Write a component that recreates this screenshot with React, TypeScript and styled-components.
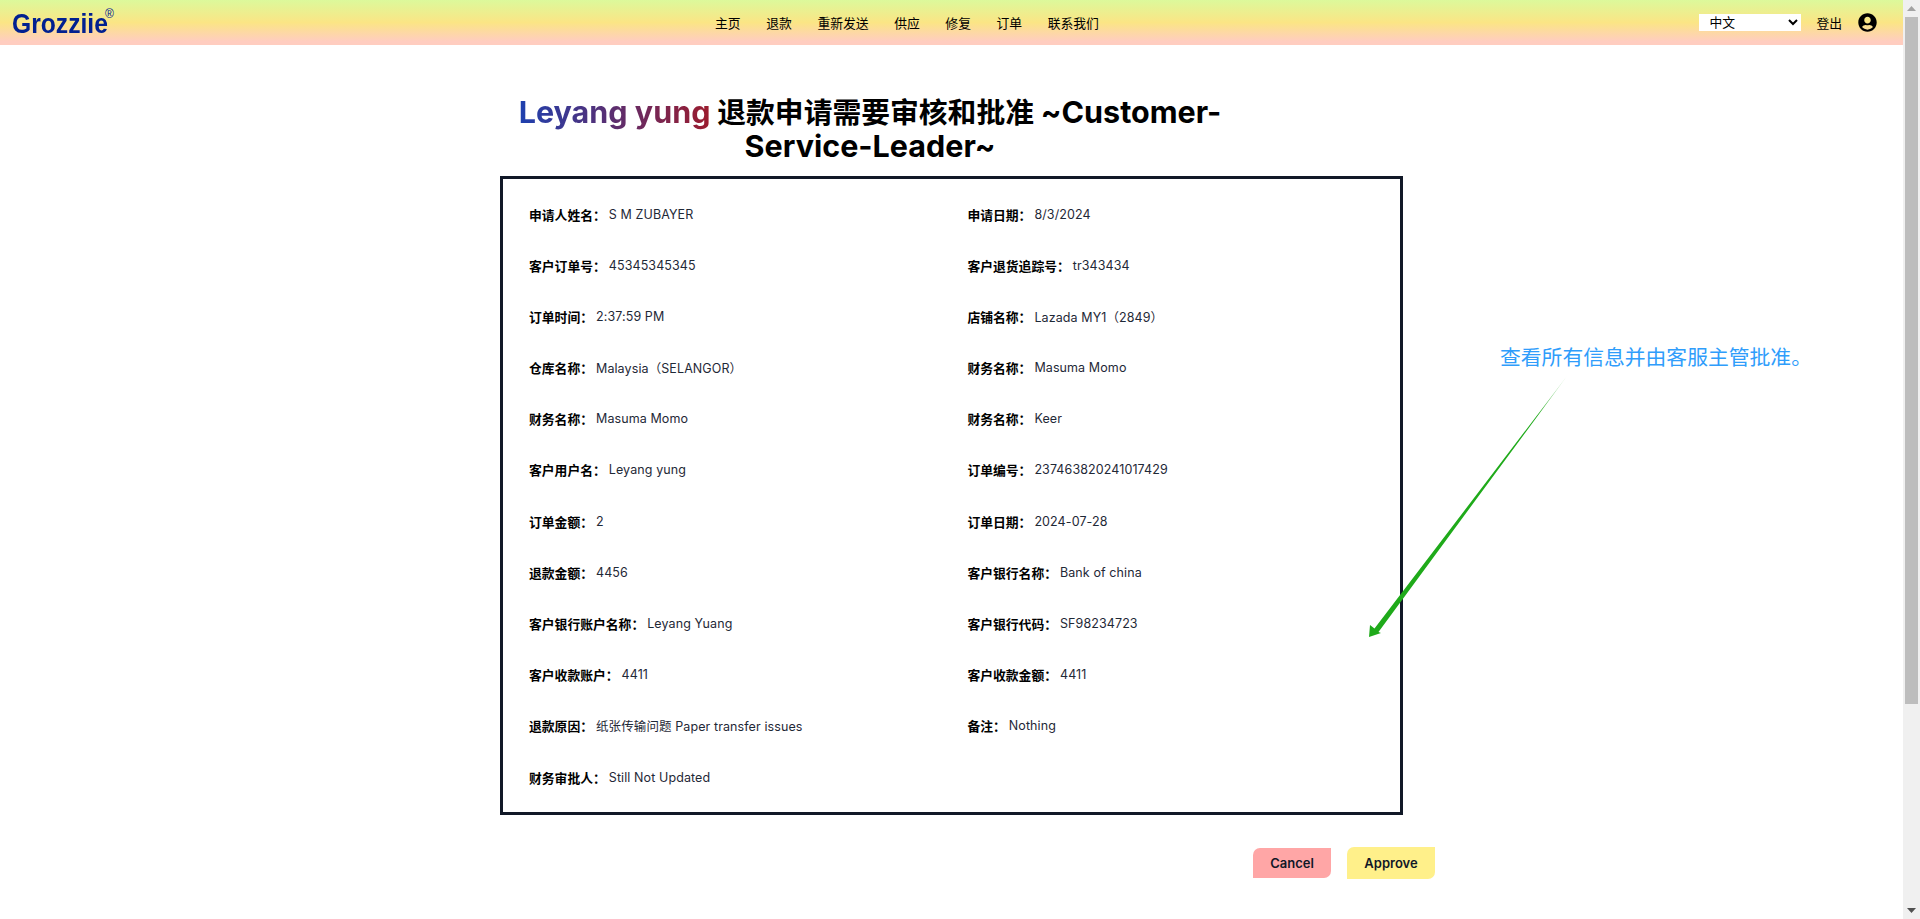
import React from 'react';
import styled, { createGlobalStyle } from 'styled-components';
import { FaUserCircle } from 'react-icons/fa';

const navItems = ['主页', '退款', '重新发送', '供应', '修复', '订单', '联系我们'];

const fields: [string, string][] = [
  ['申请人姓名：', 'S M ZUBAYER'],
  ['申请日期：', '8/3/2024'],
  ['客户订单号：', '45345345345'],
  ['客户退货追踪号：', 'tr343434'],
  ['订单时间：', '2:37:59 PM'],
  ['店铺名称：', 'Lazada MY1（2849）'],
  ['仓库名称：', 'Malaysia（SELANGOR）'],
  ['财务名称：', 'Masuma Momo'],
  ['财务名称：', 'Masuma Momo'],
  ['财务名称：', 'Keer'],
  ['客户用户名：', 'Leyang yung'],
  ['订单编号：', '237463820241017429'],
  ['订单金额：', '2'],
  ['订单日期：', '2024-07-28'],
  ['退款金额：', '4456'],
  ['客户银行名称：', 'Bank of china'],
  ['客户银行账户名称：', 'Leyang Yuang'],
  ['客户银行代码：', 'SF98234723'],
  ['客户收款账户：', '4411'],
  ['客户收款金额：', '4411'],
  ['退款原因：', '纸张传输问题 Paper transfer issues'],
  ['备注：', 'Nothing'],
  ['财务审批人：', 'Still Not Updated'],
];

const FONT = `Inter, "Noto Sans CJK SC", sans-serif`;

const GlobalStyle = createGlobalStyle`
  html, body {
    height: 100%;
    overflow: hidden;
  }
  body {
    margin: 0;
    background: #fff;
    font-family: ${FONT};
    color: #000;
  }
`;

const Shell = styled.div`
  display: flex;
  height: 919px;
`;

const Page = styled.div`
  position: relative;
  flex: 1;
  min-width: 0;
`;

// the browser's own scrollbar, the sandbox hides the native one
const ScrollRail = styled.div`
  width: 17px;
  flex: none;
  display: flex;
  flex-direction: column;
  align-items: center;
  background: #f0f0f0;
`;

const ScrollButton = styled.div`
  height: 17px;
  display: flex;
  align-items: center;
  justify-content: center;
`;

const ScrollThumb = styled.div`
  width: 13px;
  height: 687px;
  background: #bdbdbd;
`;

const ScrollSpace = styled.div`
  flex: 1;
`;

const Header = styled.header`
  height: 45px;
  display: flex;
  align-items: center;
  padding: 0 26px 0 12px;
  background: linear-gradient(180deg, #dcf99b 0%, #fbe585 50%, #ffcdc0 92%);
`;

const LogoWrap = styled.div`
  display: flex;
  align-items: flex-start;
  width: 103px;
  padding-top: 2px;
  font-family: "Liberation Sans", Arial, sans-serif;
  color: #012090;
`;

const Logo = styled.span`
  display: inline-block;
  width: 93px;
  font-weight: 700;
  font-size: 28px;
  line-height: 30px;
  white-space: nowrap;
  transform: scaleX(0.88);
  transform-origin: left center;
`;

const Registered = styled.span`
  font-size: 12px;
  line-height: 12px;
  margin: -1px 0 0 0;
`;

const Nav = styled.nav`
  display: flex;
  gap: 25.6px;
  margin-left: 600px;
  font-size: 12.8px;
`;

const HeaderRight = styled.div`
  display: flex;
  align-items: center;
  margin-left: auto;
  font-size: 12.8px;
`;

const LangSelect = styled.select`
  width: 102px;
  height: 17px;
  border: 0;
  border-radius: 0;
  padding: 0 0 0 6px;
  background: #fff;
  font-family: ${FONT};
  font-size: 12.8px;
  outline: none;
`;

const Logout = styled.span`
  margin: 0 16px 0 15px;
`;

const UserIcon = styled(FaUserCircle)`
  width: 19px;
  height: 19px;
`;

const Main = styled.main`
  width: 903px;
  margin: 0 auto;
`;

const Title = styled.h1`
  margin: 50px 0 0;
  width: 740px;
  height: 66px;
  font-size: 28.8px;
  line-height: 33px;
  font-weight: 700;
  text-align: center;
  color: #000;
`;

const TitleLine = styled.span`
  display: block;
  white-space: nowrap;
`;

const Latin = styled.span`
  font-size: 30.5px;
`;

const NameGradient = styled(Latin)`
  background: linear-gradient(90deg, #1e40af, #9b1c2e);
  -webkit-background-clip: text;
  background-clip: text;
  color: transparent;
`;

const Card = styled.section`
  box-sizing: border-box;
  margin-top: 15px;
  height: 639px;
  border: 3px solid #111827;
  padding: 25px 26px 0;
  display: grid;
  grid-template-columns: 438.4px 1fr;
  grid-auto-rows: 51.2px;
  align-items: start;
`;

const Field = styled.div`
  display: flex;
  align-items: center;
  height: 20px;
  white-space: nowrap;
`;

const Label = styled.span`
  font-size: 12.8px;
  font-weight: 600;
  color: #000;
  margin-right: 3px;
`;

const Value = styled.span`
  font-size: 12.5px;
  letter-spacing: 0.1px;
  color: #1f2937;
`;

const Actions = styled.div`
  display: flex;
  justify-content: flex-end;
  align-items: center;
  gap: 16px;
  margin: 32px -32px 0 0;
`;

const ActionButton = styled.button<{ $bg: string; $w: number; $h: number }>`
  width: ${({ $w }) => $w}px;
  height: ${({ $h }) => $h}px;
  border: 0;
  border-radius: 7px 0 7px 0;
  background: ${({ $bg }) => $bg};
  font-family: ${FONT};
  font-size: 13px;
  font-weight: 600;
  color: #111827;
`;

const Note = styled.div`
  position: absolute;
  left: 1500px;
  top: 343px;
  font-size: 20.8px;
  line-height: 30px;
  color: #2f9dfb;
  white-space: nowrap;
`;

const Arrow = styled.svg`
  position: absolute;
  left: 1360px;
  top: 370px;
`;

export default function App() {
  return (
    <Shell>
      <GlobalStyle />
      <Page>
        <Header>
          <LogoWrap>
            <Logo>Grozziie</Logo>
            <Registered>®</Registered>
          </LogoWrap>
          <Nav>
            {navItems.map((item) => (
              <span key={item}>{item}</span>
            ))}
          </Nav>
          <HeaderRight>
            <LangSelect defaultValue="zh">
              <option value="zh">中文</option>
              <option value="en">English</option>
            </LangSelect>
            <Logout>登出</Logout>
            <UserIcon />
          </HeaderRight>
        </Header>
        <Main>
          <Title>
            <TitleLine>
              <NameGradient>Leyang yung</NameGradient> 退款申请需要审核和批准 <Latin>~Customer-</Latin>
            </TitleLine>
            <TitleLine>
              <Latin>Service-Leader~</Latin>
            </TitleLine>
          </Title>
          <Card>
            {fields.map(([label, value], i) => (
              <Field key={i}>
                <Label>{label}</Label>
                <Value>{value}</Value>
              </Field>
            ))}
          </Card>
          <Actions>
            <ActionButton $bg="#ffa6a6" $w={78} $h={30}>Cancel</ActionButton>
            <ActionButton $bg="#fff08a" $w={88} $h={32}>Approve</ActionButton>
          </Actions>
        </Main>
        <Note>查看所有信息并由客服主管批准。</Note>
        <Arrow width="220" height="280" viewBox="0 0 220 280">
          <defs>
            <linearGradient id="arrowFade" x1="207" y1="6" x2="9" y2="267" gradientUnits="userSpaceOnUse">
              <stop offset="0" stopColor="#1faa1a" stopOpacity="0.25" />
              <stop offset="0.15" stopColor="#1faa1a" />
              <stop offset="1" stopColor="#1faa1a" />
            </linearGradient>
          </defs>
          <path d="M207 6 L18.5 262 L21 263 L9 267 L10 255 L14.5 258.5 Z" fill="url(#arrowFade)" />
        </Arrow>
      </Page>
      <ScrollRail>
        <ScrollButton>
          <svg width="9" height="5" viewBox="0 0 9 5">
            <path d="M4.5 0 L9 5 L0 5 Z" fill="#a3a3a3" />
          </svg>
        </ScrollButton>
        <ScrollThumb />
        <ScrollSpace />
        <ScrollButton>
          <svg width="9" height="5" viewBox="0 0 9 5">
            <path d="M0 0 L9 0 L4.5 5 Z" fill="#505050" />
          </svg>
        </ScrollButton>
      </ScrollRail>
    </Shell>
  );
}
